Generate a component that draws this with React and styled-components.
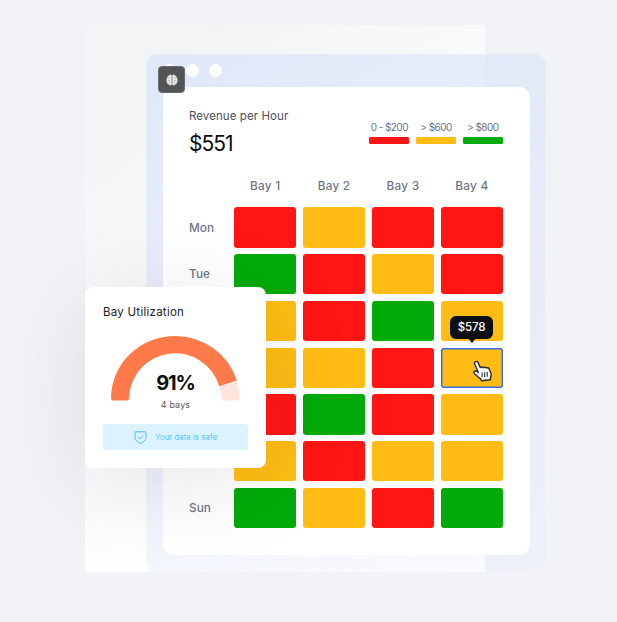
import React from "react";
import styled, { createGlobalStyle } from "styled-components";

const colors = { r: "#ff1614", y: "#ffbc14", g: "#02aa0a" };

const GlobalStyle = createGlobalStyle`
  * { box-sizing: border-box; }
  body { margin: 0; background: #f1f3f7; font-family: Inter, "Liberation Sans", sans-serif; overflow: hidden; }
`;

const Stage = styled.main`
  position: relative;
  width: 617px;
  height: 622px;
  padding: 54px 0 0 146px;
  background: #f1f3f7;
  overflow: hidden;
`;

const Backdrop = styled.div`
  position: absolute;
  left: 85px;
  top: 25px;
  width: 400px;
  height: 547px;
  background: linear-gradient(140deg, #f3f4f6 12%, #f9fafb 42%, #ffffff 72%);
`;

const BrowserWindow = styled.section`
  position: relative;
  width: 400px;
  height: 517.5px;
  padding: 0 16.5px;
  border-radius: 11px;
  background: linear-gradient(160deg, rgba(214, 225, 248, 0.66), rgba(218, 227, 247, 0.48) 50%, rgba(226, 234, 252, 0.22));
  box-shadow: inset 0 0 0 1px rgba(255, 255, 255, 0.2);
`;

const TitleBar = styled.div`
  display: flex;
  align-items: center;
  gap: 9.6px;
  height: 33px;
`;

const WindowDot = styled.span`
  width: 13.5px;
  height: 13.5px;
  border-radius: 50%;
  background: #fff;
`;

const BrainBadge = styled.div`
  position: absolute;
  left: 158px;
  top: 66px;
  width: 27px;
  height: 27px;
  display: grid;
  place-items: center;
  border-radius: 4px;
  border: 1px solid #6b6d72;
  background: #535456;
  z-index: 1;
`;

const Panel = styled.div`
  height: 467.5px;
  padding: 21px 26.5px 0;
  border-radius: 11px;
  background: #fff;
`;

const PanelHeader = styled.header`
  display: flex;
  justify-content: space-between;
  height: 68px;
`;

const Title = styled.h2`
  margin: 0;
  font-size: 11.5px;
  font-weight: 400;
  line-height: 16px;
  letter-spacing: ${(p) => (p.$dark ? "0.26px" : "0.08px")};
  white-space: nowrap;
  color: ${(p) => (p.$dark ? "#202226" : "#4b4f5a")};
`;

const Revenue = styled.div`
  margin-top: 7px;
  font-size: 21px;
  line-height: 26px;
  letter-spacing: -1px;
  color: #0c0d0f;
`;

const Legend = styled.div`
  display: flex;
  gap: 6.5px;
  padding-top: 13px;
`;

const LegendItem = styled.div`
  width: 40.3px;
  font-size: 10px;
  line-height: 13px;
  letter-spacing: -0.55px;
  text-align: center;
  white-space: nowrap;
  color: #6c7487;
`;

const LegendBar = styled.div`
  height: 7px;
  margin-top: 3px;
  border-radius: 1.5px;
  background: ${(p) => colors[p.$tone]};
`;

const HeatGrid = styled.div`
  display: grid;
  grid-template-columns: 38.5px repeat(4, 1fr);
  grid-template-rows: 25px repeat(7, 40.3px);
  gap: 6.45px;
  align-items: center;
  font-size: 11.8px;
  font-weight: 500;
  color: #707789;
`;

const ColumnLabel = styled.div`
  text-align: center;
  letter-spacing: 0.25px;
  padding-bottom: 6px;
`;

const DayLabel = styled.div`
  letter-spacing: 0.05px;
`;

const Cell = styled.div`
  position: relative;
  height: 100%;
  border-radius: 3px;
  background: ${(p) => colors[p.$tone]};
  box-shadow: ${(p) => (p.$selected ? "inset 0 0 0 1.5px #3a6fe8" : "none")};
`;

const Tooltip = styled.div`
  position: absolute;
  left: 9.5px;
  top: -31.8px;
  width: 43px;
  height: 23px;
  border-radius: 6px;
  background: #0d0f12;
  color: #fff;
  font-size: 11.5px;
  line-height: 23px;
  letter-spacing: -0.1px;
  text-align: center;
  &::after {
    content: "";
    position: absolute;
    left: 18px;
    top: 22px;
    border: solid transparent;
    border-width: 5px 4px 0;
    border-top-color: #0d0f12;
  }
`;

const Pointer = styled.svg`
  position: absolute;
  left: 32.5px;
  top: 12.5px;
  width: 20px;
  height: 22px;
`;

const UtilizationCard = styled.aside`
  position: absolute;
  left: 85px;
  top: 287px;
  width: 181px;
  height: 181px;
  padding: 17px 18px 0;
  border-radius: 8px;
  background: #fff;
  box-shadow: 0 16px 90px rgba(34, 26, 40, 0.1);
`;

const Gauge = styled.div`
  position: relative;
  width: 131px;
  height: 82px;
  margin: 15px 0 0 7px;
`;

const GaugeText = styled.div`
  position: absolute;
  inset: 36px 0 0;
  text-align: center;
`;

const Percent = styled.div`
  font-size: 20px;
  line-height: 24px;
  font-weight: 700;
  letter-spacing: -1.1px;
  color: #0e0f11;
`;

const Caption = styled.div`
  font-size: 9px;
  line-height: 14px;
  margin-top: 3px;
  letter-spacing: 0.1px;
  color: #555963;
`;

const SafeNotice = styled.div`
  display: flex;
  align-items: center;
  justify-content: center;
  gap: 8.5px;
  height: 26px;
  margin-top: 7px;
  border-radius: 2.5px;
  background: #dbf2ff;
  color: #52c1f8;
  font-size: 7.5px;
  letter-spacing: 0.17px;
`;

const legend = [["0 - $200", "r"], ["> $600", "y"], ["> $800", "g"]];
const rows = [
  ["Mon", "ryrr"],
  ["Tue", "gryr"],
  ["", "yrgy"],
  ["", "yyry"],
  ["", "rgry"],
  ["", "yryy"],
  ["Sun", "gyrg"],
];

function HandPointer() {
  return (
    <Pointer viewBox="0 0 20 22">
      <path
        d="M2.2 1.8C3.3.9 4.7 1.4 5.1 2.6L7.2 7.5C8 6.7 9.5 6.8 10 7.8C10.9 6.9 12.5 7 13 8C14.2 7.3 15.6 7.8 16.1 9L18 13.3C18.6 15.3 17.8 16.8 17.4 18.1L17.6 19.8L8.5 20.7L7.9 19C5.8 18 3.8 15.8 1.4 13.5C0 12 1.5 10.5 3.1 11.2L5.3 12.5L1.8 4.2C1.3 3.3 1.5 2.4 2.2 1.8Z"
        fill="#fff"
        stroke="#292929"
        strokeWidth="1.4"
        strokeLinejoin="round"
      />
      <path d="M9.1 12.4v4.8M11.7 12.2v4.8M14.2 12v4.8" stroke="#292929" strokeWidth="1.1" />
    </Pointer>
  );
}

function BrainIcon() {
  return (
    <svg width="12" height="12" viewBox="0 0 12 12">
      <g fill="#e8e8e8">
        <path d="M5.7 1.3V10.8C4.7 12 3.3 11.6 3 10.5C1.8 10.6 1 9.7 1.3 8.6C.3 8 .1 6.8.7 6C.1 5 .5 3.9 1.5 3.5C1.3 2.3 2.1 1.5 3.1 1.6C3.7.4 5.1.3 5.7 1.3Z" />
        <path d="M6.3 1.3V10.8C7.3 12 8.7 11.6 9 10.5C10.2 10.6 11 9.7 10.7 8.6C11.7 8 11.9 6.8 11.3 6C11.9 5 11.5 3.9 10.5 3.5C10.7 2.3 9.9 1.5 8.9 1.6C8.3.4 6.9.3 6.3 1.3Z" />
      </g>
      <path d="M2.1 4.2Q3.1 4.1 3.3 3.1M9.9 4.2Q8.9 4.1 8.7 3.1M1.8 6.4H4M10.2 6.4H8M3 9Q3.2 8 4.3 8M9 9Q8.8 8 7.7 8" fill="none" stroke="#999" strokeWidth=".55" />
    </svg>
  );
}

function GaugeArc() {
  return (
    <svg width="131" height="66" viewBox="0 0 131 66" fill="none">
      <path d="M126.4 46A64.5 64.5 0 0 1 130 63.5Q130 65.5 128 65.5H114Q112.2 65.5 112 63.4A46 46 0 0 0 109.2 51.6Z" fill="#ffe5dc" />
      <path d="M1 63.5C1.5 28 30 1 65.5 1A64.5 64.5 0 0 1 126.9 45.5L109.2 51.2A46 46 0 0 0 19.1 63.2Q18.9 65.5 16.8 65.5H3Q1 65.5 1 63.5Z" fill="#ff7a4a" />
    </svg>
  );
}

function ShieldIcon() {
  return (
    <svg width="13" height="13" viewBox="0 0 13 13" fill="none" stroke="#52c1f8" strokeLinejoin="round" strokeLinecap="round">
      <path d="M2 .8H11Q12 .8 12 1.8V6.3C12 9.5 9.3 11.2 6.5 12.4C3.7 11.2 1 9.5 1 6.3V1.8Q1 .8 2 .8Z" />
      <path d="M4.2 6.5L5.8 8L8.8 4.9" />
    </svg>
  );
}

export default function App() {
  return (
    <>
      <GlobalStyle />
      <Stage>
        <Backdrop />
        <BrowserWindow>
          <TitleBar>
            <WindowDot /><WindowDot /><WindowDot />
          </TitleBar>
          <Panel>
            <PanelHeader>
              <div>
                <Title>Revenue per Hour</Title>
                <Revenue>$551</Revenue>
              </div>
              <Legend>
                {legend.map(([label, tone]) => (
                  <LegendItem key={label}>{label}<LegendBar $tone={tone} /></LegendItem>
                ))}
              </Legend>
            </PanelHeader>
            <HeatGrid>
              <span />
              {[1, 2, 3, 4].map((n) => <ColumnLabel key={n}>Bay {n}</ColumnLabel>)}
              {rows.map(([day, tones], row) => (
                <React.Fragment key={row}>
                  <DayLabel>{day}</DayLabel>
                  {[...tones].map((tone, col) => {
                    const selected = row === 3 && col === 3;
                    return (
                      <Cell key={col} $tone={tone} $selected={selected}>
                        {selected && <><Tooltip>$578</Tooltip><HandPointer /></>}
                      </Cell>
                    );
                  })}
                </React.Fragment>
              ))}
            </HeatGrid>
          </Panel>
        </BrowserWindow>
        <BrainBadge><BrainIcon /></BrainBadge>
        <UtilizationCard>
          <Title as="h3" $dark>Bay Utilization</Title>
          <Gauge>
            <GaugeArc />
            <GaugeText>
              <Percent>91%</Percent>
              <Caption>4 bays</Caption>
            </GaugeText>
          </Gauge>
          <SafeNotice><ShieldIcon /><span>Your data is safe</span></SafeNotice>
        </UtilizationCard>
      </Stage>
    </>
  );
}
